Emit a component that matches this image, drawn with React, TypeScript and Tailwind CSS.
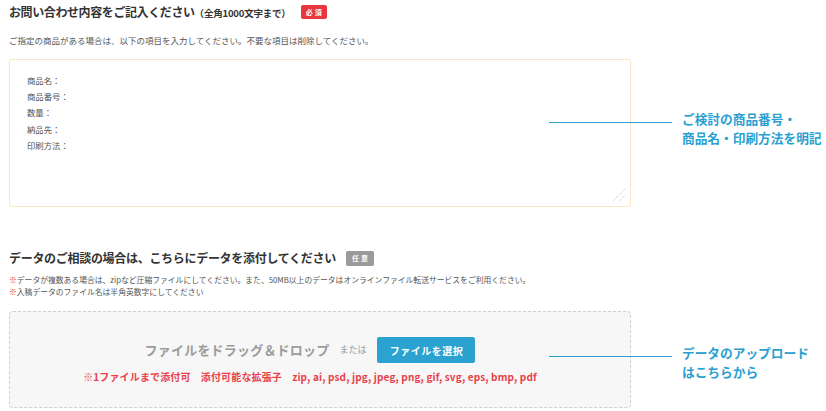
import React from 'react';

const fields = ['商品名：', '商品番号：', '数量：', '納品先：', '印刷方法：'];

function Annotation({ lineTop, textTop, lines }: { lineTop: string; textTop: string; lines: string[] }) {
  return (
    <>
      <div className={`absolute left-[539px] w-[123px] h-px bg-[#2a9fd0] ${lineTop}`} />
      <div className={`absolute left-[672px] w-[150px] text-[12.7px] leading-[19px] font-bold text-[#2a9fd0] whitespace-nowrap ${textTop}`}>
        {lines.map((l) => (
          <div key={l}>{l}</div>
        ))}
      </div>
    </>
  );
}

export default function App() {
  return (
    <div
      className="relative w-[826px] h-[411px] bg-white overflow-hidden pl-[9px] text-[#333]"
      style={{ fontFamily: '"Noto Sans CJK JP", "Noto Sans", sans-serif' }}
    >
      {/* Inquiry content */}
      <div className="flex items-center pt-[2px] h-[22px]">
        <h2 className="text-[12px] leading-[20px] font-bold tracking-[-0.4px]">
          お問い合わせ内容をご記入ください
          <span className="text-[9.5px] tracking-[-0.2px]">（全角1000文字まで）</span>
        </h2>
        <span className="ml-[10px] w-[26px] h-[14px] rounded-[2px] bg-[#e8373f] text-white text-[7px] font-bold flex items-center justify-center tracking-[2px] pl-[2px]">
          必須
        </span>
      </div>
      <p className="mt-[12px] text-[8.5px] leading-[12px] text-[#555]">
        ご指定の商品がある場合は、以下の項目を入力してください。不要な項目は削除してください。
      </p>
      <div className="relative mt-[13px] w-[622px] h-[148px] border border-[#fde6c6] rounded-[2px] bg-white pt-[12px] pl-[17px]">
        <div className="text-[8.4px] leading-[16.2px] text-[#555]">
          {fields.map((f) => (
            <div key={f}>{f}</div>
          ))}
        </div>
        <svg className="absolute right-[3px] bottom-[4px] w-[15px] h-[15px]" viewBox="0 0 15 15">
          <line x1="1" y1="14" x2="14" y2="1" stroke="#bbb" strokeWidth="0.8" strokeDasharray="1 1" />
          <line x1="7" y1="14" x2="14" y2="7" stroke="#bbb" strokeWidth="0.8" strokeDasharray="1 1" />
        </svg>
        <Annotation lineTop="top-[62px]" textTop="top-[49px]" lines={['ご検討の商品番号・', '商品名・印刷方法を明記']} />
      </div>

      {/* Data upload */}
      <div className="flex items-center mt-[41px] h-[20px]">
        <h2 className="text-[12px] leading-[20px] font-bold tracking-[-0.3px]">
          データのご相談の場合は、こちらにデータを添付してください
        </h2>
        <span className="ml-[10px] w-[28px] h-[15px] rounded-[2px] bg-[#9a9a9a] text-white text-[7px] font-bold flex items-center justify-center tracking-[2px] pl-[2px]">
          任意
        </span>
      </div>
      <div className="mt-[6px] text-[7.8px] leading-[12px] text-[#555]">
        <p>
          <span className="text-[#e8373f]">※</span>データが複数ある場合は、zipなど圧縮ファイルにしてください。また、50MB以上のデータはオンラインファイル転送サービスをご利用ください。
        </p>
        <p>
          <span className="text-[#e8373f]">※</span>入稿データのファイル名は半角英数字にしてください
        </p>
      </div>
      <div className="relative mt-[13px] w-[622px] h-[97px] border-[1.5px] border-dashed border-[#cfcfcf] rounded-[4px] bg-[#f7f7f7] flex flex-col items-center pt-[25px] pr-[20px]">
        <div className="flex items-center">
          <span className="text-[13px] font-bold text-[#9c9c9c] tracking-[0.2px]">ファイルをドラッグ＆ドロップ</span>
          <span className="ml-[10px] text-[9px] text-[#9c9c9c]">または</span>
          <button className="ml-[11px] w-[98px] h-[26px] rounded-[2px] bg-[#2ba2d0] text-white text-[10px] font-bold tracking-[0.5px]">
            ファイルを選択
          </button>
        </div>
        <p className="mt-[7px] text-[10px] leading-[14px] font-bold text-[#e8414a] whitespace-nowrap tracking-[0.15px]">
          ※1ファイルまで添付可　添付可能な拡張子　zip, ai, psd, jpg, jpeg, png, gif, svg, eps, bmp, pdf
        </p>
        <Annotation lineTop="top-[44px]" textTop="top-[31px]" lines={['データのアップロード', 'はこちらから']} />
      </div>
    </div>
  );
}
